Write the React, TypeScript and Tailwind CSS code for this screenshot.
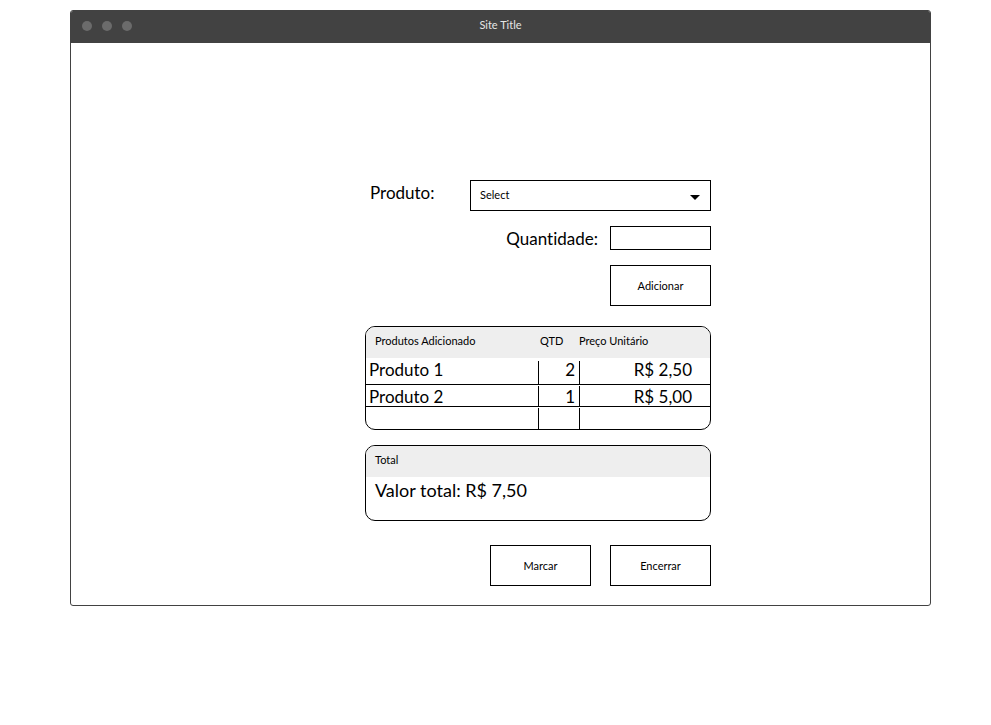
const font = { fontFamily: "Lato, 'Noto Sans', sans-serif" };

function Caret() {
  return (
    <svg width="10" height="6" viewBox="0 0 10 6" className="text-black">
      <path d="M0 1h10L5 6z" fill="currentColor" />
    </svg>
  );
}

const rows = [
  { name: "Produto 1", qty: "2", price: "R$ 2,50" },
  { name: "Produto 2", qty: "1", price: "R$ 5,00" },
  { name: "", qty: "", price: "" },
];

export default function App() {
  return (
    <div className="bg-white w-[991px] h-[725px] pt-[10px] pl-[70px] [font-variant-ligatures:none]" style={font}>
      <div className="w-[861px] h-[596px] border border-[#424242] rounded-[3px] flex flex-col overflow-hidden">
        {/* title bar */}
        <div className="h-[32px] bg-[#424242] relative flex items-center shrink-0">
          <div className="flex gap-[10px] pl-[11px] -mt-[3px]">
            <span className="w-[10px] h-[10px] rounded-full bg-[#6b6b6b]" />
            <span className="w-[10px] h-[10px] rounded-full bg-[#6b6b6b]" />
            <span className="w-[10px] h-[10px] rounded-full bg-[#6b6b6b]" />
          </div>
          <div className="absolute inset-0 flex items-center justify-center text-[11px] text-[#e6e6e6] pb-[3px]">
            Site Title
          </div>
        </div>

        {/* content */}
        <div className="pl-[294px] pt-[137px] text-black">
          <div className="w-[346px] flex flex-col">
            <div className="flex items-center h-[31px]">
              <span className="w-[105px] pl-[5px] text-[17px] leading-none -mt-[6px]">Produto:</span>
              <div className="w-[241px] h-[31px] border border-black flex items-center justify-between pl-[9px] pr-[10px]">
                <span className="text-[11px] -mt-[1px]">Select</span>
                <span className="mt-[2px]"><Caret /></span>
              </div>
            </div>

            <div className="flex items-center justify-end mt-[15px] h-[24px]">
              <span className="text-[17px] leading-none mr-[12px]">Quantidade:</span>
              <div className="w-[101px] h-[24px] border border-black" />
            </div>

            <div className="flex justify-end mt-[15px]">
              <button className="w-[101px] h-[41px] border border-black text-[11px] flex items-center justify-center pt-[1px]">
                Adicionar
              </button>
            </div>

            {/* table */}
            <div className="mt-[20px] border border-black rounded-[10px] overflow-hidden">
              <div className="h-[31px] bg-[#eeeeee] flex items-center text-[11px] pb-[2px]">
                <span className="w-[172px] pl-[9px]">Produtos Adicionado</span>
                <span className="w-[41px] pl-[2px]">QTD</span>
                <span>Preço Unitário</span>
              </div>
              {rows.map((r, i) => (
                <div
                  key={i}
                  className={`flex text-[17px] leading-none ${i === 0 ? "h-[27px]" : "h-[22px] pt-[1px]"} ${i < 2 ? "border-b border-black" : ""}`}
                >
                  <div className={`w-[172px] pl-[3px] flex items-center ${i === 0 ? "pb-[4px]" : ""}`}>{r.name}</div>
                  <div className={`w-[41px] border-l border-black flex items-center justify-end pr-[4px] ${i === 0 ? "mt-[3px] pb-[7px]" : ""}`}>
                    {r.qty}
                  </div>
                  <div className={`flex-1 border-l border-black flex items-center justify-end pr-[18px] ${i === 0 ? "mt-[3px] pb-[7px]" : ""}`}>
                    {r.price}
                  </div>
                </div>
              ))}
            </div>

            {/* total */}
            <div className="mt-[15px] h-[76px] border border-black rounded-[10px] overflow-hidden">
              <div className="h-[31px] bg-[#eeeeee] flex items-center pl-[9px] text-[11px] pb-[2px]">Total</div>
              <div className="pl-[9px] text-[18px] leading-[26px]">Valor total: R$ 7,50</div>
            </div>

            {/* actions */}
            <div className="mt-[24px] flex justify-end gap-[19px]">
              <button className="w-[101px] h-[41px] border border-black text-[11px] flex items-center justify-center pt-[1px]">
                Marcar
              </button>
              <button className="w-[101px] h-[41px] border border-black text-[11px] flex items-center justify-center pt-[1px]">
                Encerrar
              </button>
            </div>
          </div>
        </div>
      </div>
    </div>
  );
}
